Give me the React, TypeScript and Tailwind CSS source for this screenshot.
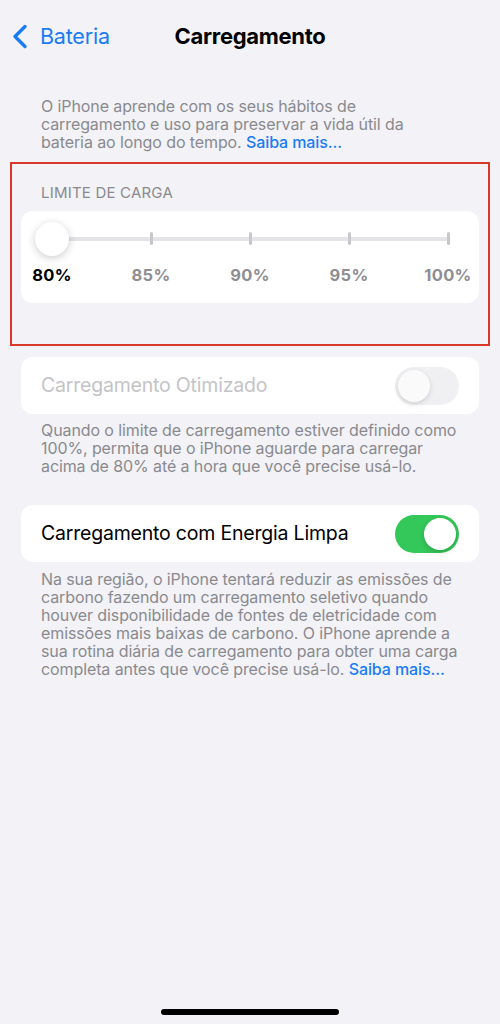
const ticks = ["80%", "85%", "90%", "95%", "100%"];

function Toggle({ on, disabled }: { on: boolean; disabled?: boolean }) {
  return (
    <div
      className={`w-[64px] h-[38px] rounded-full p-[3px] flex ${
        on ? "bg-[#34c759] justify-end" : "bg-[#f0f0f3] justify-start"
      }`}
    >
      <div
        className={`w-[32px] h-[32px] rounded-full bg-white shadow-[0_2px_5px_rgba(0,0,0,0.18)] ${
          disabled ? "opacity-70" : ""
        }`}
      />
    </div>
  );
}

export default function App() {
  return (
    <div
      className="w-[500px] h-[1024px] bg-[#f2f2f7] flex flex-col overflow-hidden"
      style={{ fontFamily: "Inter, 'Noto Sans', sans-serif" }}
    >
      {/* Nav bar */}
      <div className="h-[72px] flex items-center relative">
        <div className="flex items-center pl-[12px] text-[#1a7cf5]">
          <svg width="16" height="25" viewBox="0 0 16 25" fill="none">
            <path d="M13 2.5 L3 12.5 L13 22.5" stroke="currentColor" strokeWidth="3.4" strokeLinecap="round" strokeLinejoin="round" />
          </svg>
          <span className="text-[21.5px] ml-[12px] tracking-[-0.2px]">Bateria</span>
        </div>
        <div className="absolute left-0 right-0 text-center text-[22px] font-bold text-black pointer-events-none tracking-[-0.3px]">
          Carregamento
        </div>
      </div>

      {/* Intro */}
      <p className="pl-[41px] pr-[30px] mt-[25px] text-[16px] leading-[18px] text-[#8a8a8e] tracking-[-0.1px]">
        O iPhone aprende com os seus hábitos de
        <br />
        carregamento e uso para preservar a vida útil da
        <br />
        bateria ao longo do tempo. <span className="text-[#1a7cf5] font-medium">Saiba mais...</span>
      </p>

      {/* Charge limit */}
      <div className="mx-[10px] mt-[11px] h-[184px] border-2 border-[#d8392b] flex flex-col px-[9px]">
        <div className="mt-[18px] pl-[20px] text-[15px] text-[#8a8a8e] tracking-[0.2px]">
          LIMITE DE CARGA
        </div>
        <div className="mt-[6px] bg-white rounded-[12px] h-[92px] px-[14px] pt-[11px]">
          <div className="relative h-[34px] mx-[17px] flex items-center">
            <div className="absolute left-0 right-0 h-[4px] rounded-full bg-[#e3e3e8]" />
            <div className="absolute inset-0 flex justify-between items-center">
              {ticks.map((t, i) => (
                <div key={t} className="w-0 flex justify-center">
                  {i === 0 ? (
                    <div className="w-[34px] h-[34px] shrink-0 rounded-full bg-white shadow-[0_2px_8px_rgba(0,0,0,0.2)] relative z-10" />
                  ) : (
                    <div className="w-[3px] h-[13px] shrink-0 rounded-full bg-[#c7c7cc]" />
                  )}
                </div>
              ))}
            </div>
          </div>
          <div className="mx-[17px] mt-[7px] flex justify-between">
            {ticks.map((t, i) => (
              <div key={t} className="w-0 flex justify-center">
                <span
                  className={`text-[16.5px] font-bold whitespace-nowrap tracking-[0.3px] ${
                    i === 0 ? "text-black" : "text-[#8e8e93]"
                  }`}
                >
                  {t}
                </span>
              </div>
            ))}
          </div>
        </div>
      </div>

      {/* Optimized charging */}
      <div className="mx-[21px] mt-[11px] bg-white rounded-[12px] h-[57px] flex items-center justify-between pl-[20px] pr-[20px]">
        <span className="text-[19.5px] text-[#c4c4c8] tracking-[-0.2px]">Carregamento Otimizado</span>
        <Toggle on={false} disabled />
      </div>
      <p className="pl-[41px] pr-[20px] mt-[7px] text-[16px] leading-[18px] text-[#8a8a8e] tracking-[-0.1px]">
        Quando o limite de carregamento estiver definido como
        <br />
        100%, permita que o iPhone aguarde para carregar
        <br />
        acima de 80% até a hora que você precise usá-lo.
      </p>

      {/* Clean energy */}
      <div className="mx-[21px] mt-[30px] bg-white rounded-[12px] h-[57px] flex items-center justify-between pl-[20px] pr-[20px]">
        <span className="text-[19.5px] text-black tracking-[-0.2px]">Carregamento com Energia Limpa</span>
        <Toggle on />
      </div>
      <p className="pl-[41px] pr-[20px] mt-[8px] text-[16px] leading-[18px] text-[#8a8a8e] tracking-[-0.1px]">
        Na sua região, o iPhone tentará reduzir as emissões de
        <br />
        carbono fazendo um carregamento seletivo quando
        <br />
        houver disponibilidade de fontes de eletricidade com
        <br />
        emissões mais baixas de carbono. O iPhone aprende a
        <br />
        sua rotina diária de carregamento para obter uma carga
        <br />
        completa antes que você precise usá-lo.{" "}
        <span className="text-[#1a7cf5] font-medium">Saiba mais...</span>
      </p>

      {/* Home indicator */}
      <div className="mt-auto mb-[9px] flex justify-center">
        <div className="w-[178px] h-[6px] rounded-full bg-black" />
      </div>
    </div>
  );
}
